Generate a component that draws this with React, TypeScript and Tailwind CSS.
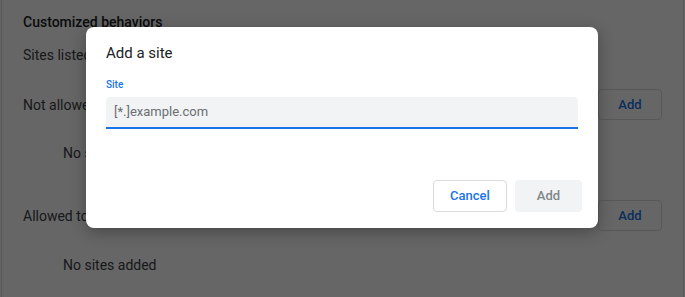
import React from 'react'

const font = { fontFamily: 'Roboto, "Liberation Sans", sans-serif' }

function PageBehind() {
  return (
    <div className="h-[297px] w-[685px] overflow-hidden bg-white px-[1px]">
      <div className="h-full border-x border-[#dadce0] bg-white pl-[21px] pr-[21px] text-[14px] leading-5 text-[#3c4043]">
        <div className="pt-[12px] font-medium text-[#202124]">Customized behaviors</div>
        <div className="mt-[13px] whitespace-nowrap">Sites listed below will use a custom setting instead of the default</div>
        <div className="mt-[24px] flex h-[31px] items-center justify-between">
          <span className="whitespace-nowrap">Not allowed to use this feature</span>
          <button className="h-[31px] w-[64px] rounded border border-[#dadce0] text-[13px] font-medium text-[#1a73e8]">Add</button>
        </div>
        <div className="mt-[23px] pl-[40px]">No sites added</div>
        <div className="mt-[37px] flex h-[31px] items-center justify-between">
          <span className="whitespace-nowrap">Allowed to use this feature</span>
          <button className="h-[31px] w-[64px] rounded border border-[#dadce0] text-[13px] font-medium text-[#1a73e8]">Add</button>
        </div>
        <div className="mt-[24px] pl-[40px]">No sites added</div>
      </div>
    </div>
  )
}

export default function App() {
  return (
    <div className="relative h-[297px] w-[685px] overflow-hidden" style={font}>
      <PageBehind />
      <div className="absolute inset-0 bg-black/60" />
      <div className="absolute left-[86px] top-[27px] flex h-[201px] w-[512px] flex-col rounded-lg bg-white shadow-[0_4px_16px_rgba(0,0,0,0.3)]">
        <div className="px-5 pt-[16px] text-[15px] leading-5 text-[#202124]">Add a site</div>
        <div className="px-5 pt-[14px]">
          <div className="text-[10px] font-medium leading-4 text-[#1a73e8]">Site</div>
          <div className="mt-[4px] flex h-[32px] items-center rounded-t border-b-2 border-[#1a73e8] bg-[#f1f3f4] px-2 text-[13px] text-[#6b6e72]">
            [*.]example.com
          </div>
        </div>
        <div className="mt-auto flex justify-end gap-2 pb-4 pr-4">
          <button className="h-[32px] w-[74px] rounded border border-[#dadce0] bg-white text-[13px] font-medium text-[#1a73e8]">Cancel</button>
          <button className="h-[32px] w-[67px] rounded bg-[#f1f3f4] text-[13px] font-medium text-[#80868b]">Add</button>
        </div>
      </div>
    </div>
  )
}
